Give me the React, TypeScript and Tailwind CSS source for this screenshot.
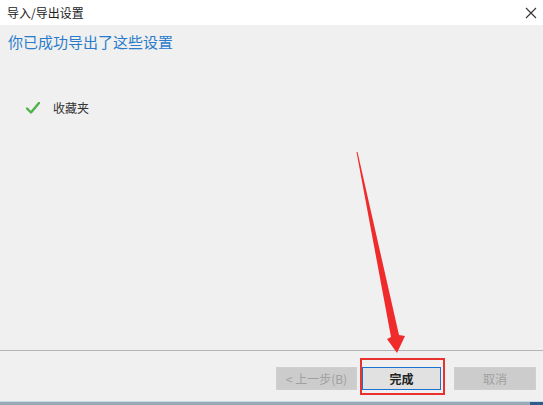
const font = { fontFamily: '"Microsoft YaHei", "Noto Sans CJK SC", "Noto Sans", sans-serif' };

function Check() {
  return (
    <svg width="14" height="12" viewBox="0 0 14 12">
      <path d="M1 6.5 L5 10.5 L13 1" fill="none" stroke="#4fb14a" strokeWidth="2.4" strokeLinecap="round" strokeLinejoin="round" />
    </svg>
  );
}

function Arrow() {
  return (
    <svg className="pointer-events-none absolute left-0 top-0" width="543" height="405" viewBox="0 0 543 405">
      <path d="M356.5 152 L391 337 L387 339 L397 353 L405 336 L399 335 L357.5 152 Z" fill="#ef2b2b" />
    </svg>
  );
}

export default function App() {
  return (
    <div className="relative flex h-[405px] w-[543px] flex-col overflow-hidden bg-[#f0f0f0] text-[#1b1b1b]" style={font}>
      {/* 标题栏 */}
      <div className="flex h-[25px] items-center justify-between bg-white pl-[7px] pr-[4px]">
        <span className="text-[12px] leading-none text-[#222]">导入/导出设置</span>
        <svg width="14" height="14" viewBox="0 0 14 14" className="mr-[1px]">
          <path d="M2 2 L12 12 M12 2 L2 12" stroke="#333" strokeWidth="1.1" />
        </svg>
      </div>

      {/* 内容 */}
      <div className="flex flex-1 flex-col">
        <h1 className="mt-[7px] pl-[8px] text-[15px] leading-[20px] text-[#2a7ccb]">你已成功导出了这些设置</h1>
        <div className="mt-[50px] flex items-center gap-[13px] pl-[26px]">
          <Check />
          <span className="text-[12px] leading-none text-[#333]">收藏夹</span>
        </div>
      </div>

      {/* 按钮区 */}
      <div className="h-[51px] border-t border-[#b4b4b4] pt-[16px]">
        <div className="flex justify-end gap-[5px] pr-[7px] text-[12px]">
          <button className="h-[23px] w-[81px] border border-[#cfcfcf] bg-[#cccccc] text-[#a0a0a0]">&lt; 上一步(B)</button>
          <button className="mr-[8px] h-[23px] w-[79px] border border-[#1a73d0] bg-[#e1e1e1] font-semibold text-[#222]">完成</button>
          <button className="h-[23px] w-[82px] border border-[#cfcfcf] bg-[#cccccc] text-[#a0a0a0]">取消</button>
        </div>
      </div>

      {/* 任务栏边缘 */}
      <div className="flex h-[4px] border-t border-[#c8dbe8] bg-[#9aa9b5]">
        <div className="flex-1" />
        <div className="w-[13px] bg-[#2f5c8a]" />
      </div>

      {/* 标注 */}
      <div className="pointer-events-none absolute left-[360px] top-[358px] h-[37px] w-[85px] border-[2.5px] border-[#e8322f]" />
      <Arrow />
    </div>
  );
}
